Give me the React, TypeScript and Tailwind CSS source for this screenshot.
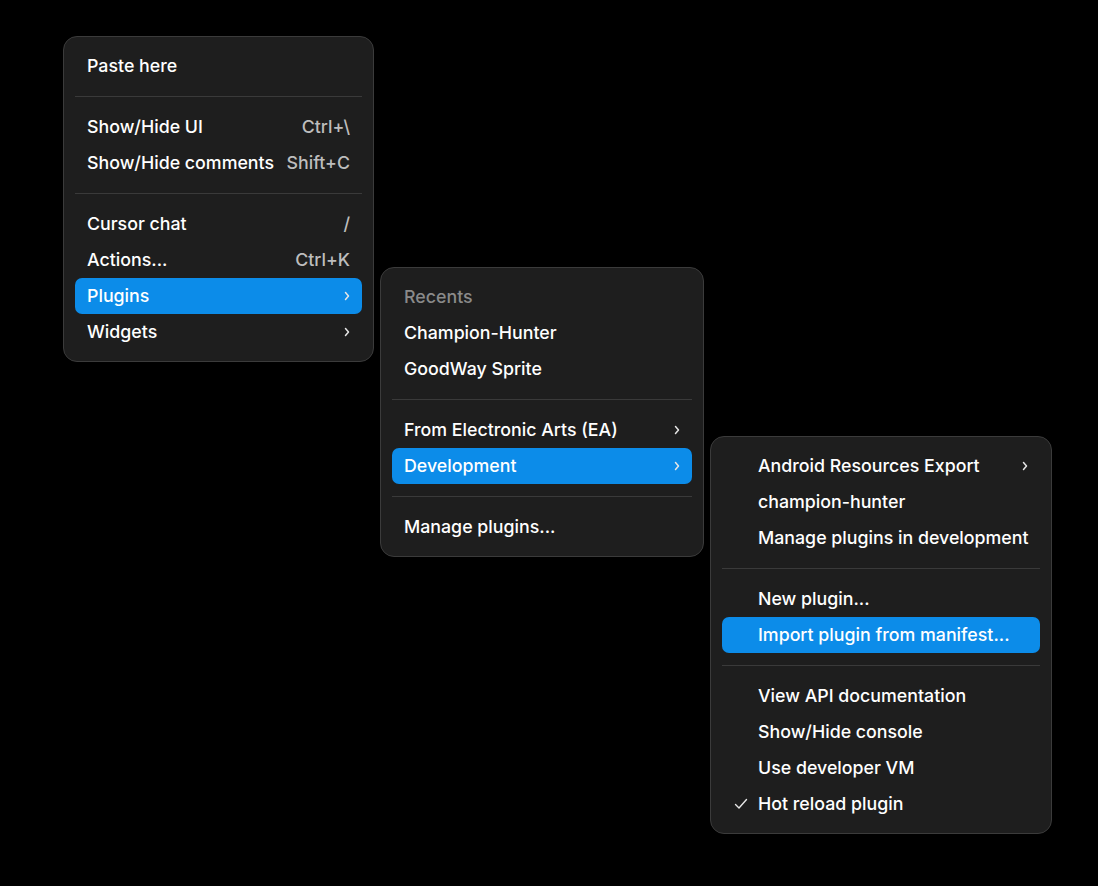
import React from "react";

type Item =
  | { kind: "sep" }
  | { kind: "label"; text: string }
  | {
      kind: "item";
      text: string;
      shortcut?: string;
      sub?: boolean;
      active?: boolean;
      checked?: boolean;
    };

function Chevron() {
  return (
    <svg width="6" height="10" viewBox="0 0 6 10" fill="none" className="shrink-0">
      <path d="M1.5 1.5 L4.5 5 L1.5 8.5" stroke="currentColor" strokeWidth="1.5" strokeLinecap="round" strokeLinejoin="round" />
    </svg>
  );
}

function Check() {
  return (
    <svg width="14" height="12" viewBox="0 0 14 12" fill="none">
      <path d="M1.5 6.5 L5 10 L12.5 1.5" stroke="currentColor" strokeWidth="1.4" strokeLinecap="round" strokeLinejoin="round" />
    </svg>
  );
}

function Menu({
  items,
  className,
  indent,
}: {
  items: Item[];
  className: string;
  indent?: boolean;
}) {
  return (
    <div
      className={`absolute rounded-[14px] border border-[#3b3b3b] bg-[#1e1e1e] px-[11px] py-[11px] text-[17.8px] font-[450] text-white ${className}`}
    >
      {items.map((it, i) => {
        if (it.kind === "sep") {
          return (
            <div key={i} className="flex h-[25px] items-center">
              <div className="h-px w-full bg-[#3a3a3a]" />
            </div>
          );
        }
        if (it.kind === "label") {
          return (
            <div key={i} className="flex h-[36px] items-center px-[12px] text-[#8a8a8a]">
              {it.text}
            </div>
          );
        }
        return (
          <div
            key={i}
            className={`flex h-[36px] items-center rounded-[7px] pl-[12px] pr-[12px] ${
              it.active ? "bg-[#0c8ce9]" : ""
            }`}
          >
            {indent && (
              <span className="flex w-[24px] shrink-0 items-center text-[#e6e6e6]">
                {it.checked && <Check />}
              </span>
            )}
            <span className="flex-1 whitespace-nowrap">{it.text}</span>
            {it.shortcut && (
              <span className="ml-[12px] whitespace-nowrap text-[#bdbdbd]">{it.shortcut}</span>
            )}
            {it.sub && (
              <span className="ml-[12px] flex items-center text-[#e6e6e6]">
                <Chevron />
              </span>
            )}
          </div>
        );
      })}
    </div>
  );
}

export default function App() {
  const main: Item[] = [
    { kind: "item", text: "Paste here" },
    { kind: "sep" },
    { kind: "item", text: "Show/Hide UI", shortcut: "Ctrl+\\" },
    { kind: "item", text: "Show/Hide comments", shortcut: "Shift+C" },
    { kind: "sep" },
    { kind: "item", text: "Cursor chat", shortcut: "/" },
    { kind: "item", text: "Actions...", shortcut: "Ctrl+K" },
    { kind: "item", text: "Plugins", sub: true, active: true },
    { kind: "item", text: "Widgets", sub: true },
  ];

  const plugins: Item[] = [
    { kind: "label", text: "Recents" },
    { kind: "item", text: "Champion-Hunter" },
    { kind: "item", text: "GoodWay Sprite" },
    { kind: "sep" },
    { kind: "item", text: "From Electronic Arts (EA)", sub: true },
    { kind: "item", text: "Development", sub: true, active: true },
    { kind: "sep" },
    { kind: "item", text: "Manage plugins..." },
  ];

  const dev: Item[] = [
    { kind: "item", text: "Android Resources Export", sub: true },
    { kind: "item", text: "champion-hunter" },
    { kind: "item", text: "Manage plugins in development" },
    { kind: "sep" },
    { kind: "item", text: "New plugin..." },
    { kind: "item", text: "Import plugin from manifest...", active: true },
    { kind: "sep" },
    { kind: "item", text: "View API documentation" },
    { kind: "item", text: "Show/Hide console" },
    { kind: "item", text: "Use developer VM" },
    { kind: "item", text: "Hot reload plugin", checked: true },
  ];

  return (
    <div
      className="relative h-[886px] w-[1098px] overflow-hidden bg-black"
      style={{ fontFamily: "Inter, 'Noto Sans', sans-serif" }}
    >
      {/* context menu + two open submenus */}
      <Menu items={main} className="left-[63px] top-[36px] w-[311px]" />
      <Menu items={plugins} className="left-[380px] top-[267px] w-[324px]" />
      <Menu items={dev} className="left-[710px] top-[436px] w-[342px]" indent />
    </div>
  );
}
